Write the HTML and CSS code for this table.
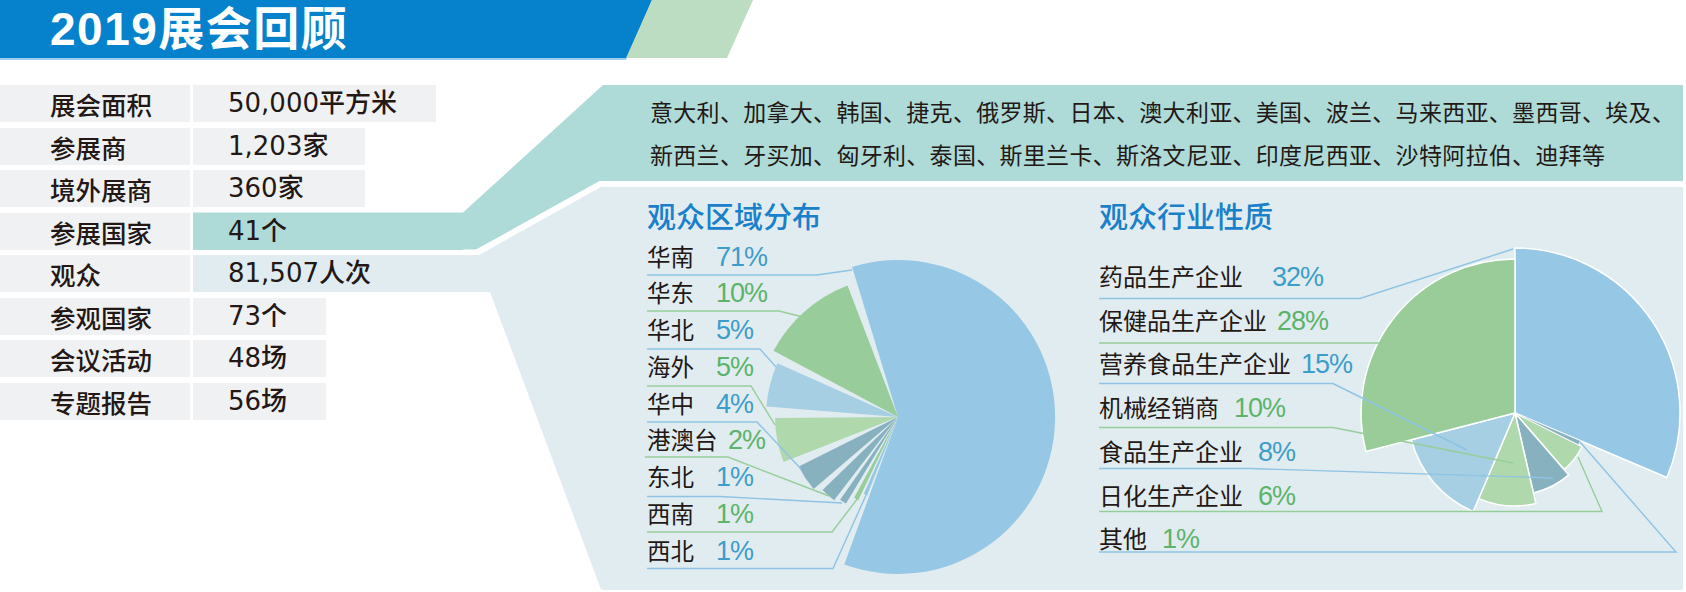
FILE: index.html
```html
<!DOCTYPE html>
<html lang="zh-CN">
<head>
<meta charset="utf-8">
<title>2019展会回顾</title>
<link rel="stylesheet" href="styles.css">
</head>
<body>
<div class="page">
  <svg class="connectors" viewBox="0 0 1686 592" width="1686" height="592" aria-hidden="true">
    <polygon class="c-teal" points="193,212.5 463,212.5 603,85 612,85 612,181 599.5,181 476,249.5 193,249.5"/>
    <polygon class="c-blue" points="193,255 479,255 601,187 612,187 612,589.5 601,589.5 490,292 193,292"/>
  </svg>

  <header class="head">
    <h1 class="title">2019展会回顾</h1>
    <div class="accent"></div>
  </header>

  <main class="main">
    <section class="stats">
      <div class="row"><div class="key">展会面积</div><div class="val w-lg">50,000平方米</div></div>
      <div class="row"><div class="key">参展商</div><div class="val w-md">1,203家</div></div>
      <div class="row"><div class="key">境外展商</div><div class="val w-md">360家</div></div>
      <div class="row"><div class="key">参展国家</div><div class="val v-teal">41个</div></div>
      <div class="row"><div class="key">观众</div><div class="val v-blue">81,507人次</div></div>
      <div class="row"><div class="key">参观国家</div><div class="val w-sm">73个</div></div>
      <div class="row"><div class="key">会议活动</div><div class="val w-sm">48场</div></div>
      <div class="row"><div class="key">专题报告</div><div class="val w-sm">56场</div></div>
    </section>

    <section class="right">
      <div class="countries">
        <p>意大利、加拿大、韩国、捷克、俄罗斯、日本、澳大利亚、美国、波兰、马来西亚、墨西哥、埃及、</p>
        <p>新西兰、牙买加、匈牙利、泰国、斯里兰卡、斯洛文尼亚、印度尼西亚、沙特阿拉伯、迪拜等</p>
      </div>

      <div class="charts">
        <div class="chart region">
          <svg class="plot" viewBox="603 187 470 402.5" aria-hidden="true">
            <g class="slices">
              <path fill="#96c7e4" d="M898 417L852.1 266.9A157 157 0 1 1 844.3 564.5Z"/>
              <path fill="#96c7e4" d="M898 417L867.2 495.2A84 84 0 0 1 863.8 493.7Z"/>
              <path fill="#99cc9b" d="M898 417L858.4 500A92 92 0 0 1 854.1 497.8Z"/>
              <path fill="#88b1c0" d="M898 417L846 503.6A101 101 0 0 1 840.1 499.7Z"/>
              <path fill="#88b1c0" d="M898 417L834.1 500.3A105 105 0 0 1 822.5 489.9Z"/>
              <path fill="#88b1c0" d="M898 417L813.6 489.1A111 111 0 0 1 798.7 466.5Z"/>
              <path fill="#b0d8ad" d="M898 417L783.6 462.1A123 123 0 0 1 775 418.1Z"/>
              <path fill="#a6cfe3" d="M898 417L766.4 406.6A132 132 0 0 1 777.4 363.3Z"/>
              <path fill="#99cc9b" d="M898 417L773.5 350.8A141 141 0 0 1 847.5 285.4Z"/>
            </g>
            <g class="leaders">
              <polyline class="lb" points="647,275 817,275 852,270"/>
              <polyline class="lg" points="647,311 779,311 803,317"/>
              <polyline class="lb" points="647,349 760,349 776,367"/>
              <polyline class="lg" points="647,386 751,386 775,425"/>
              <polyline class="lb" points="647,422 757,422 801,469"/>
              <polyline class="lg" points="645,457 728,457 829,496"/>
              <polyline class="lb" points="647,496.5 720,496.5 842,503"/>
              <polyline class="lg" points="647,532 832,532 858,498"/>
              <polyline class="lb" points="647,568.5 833,568.5 867,493"/>
            </g>
          </svg>
          <h2>观众区域分布</h2>
          <ul class="legend">
            <li><span class="lbl">华南</span><span class="pct b">71%</span></li>
            <li><span class="lbl">华东</span><span class="pct g">10%</span></li>
            <li><span class="lbl">华北</span><span class="pct b">5%</span></li>
            <li><span class="lbl">海外</span><span class="pct g">5%</span></li>
            <li><span class="lbl">华中</span><span class="pct b">4%</span></li>
            <li class="tight"><span class="lbl">港澳台</span><span class="pct g">2%</span></li>
            <li><span class="lbl">东北</span><span class="pct b">1%</span></li>
            <li><span class="lbl">西南</span><span class="pct g">1%</span></li>
            <li><span class="lbl">西北</span><span class="pct b">1%</span></li>
          </ul>
        </div>

        <div class="chart industry">
          <svg class="plot" viewBox="1073 187 610 402.5" aria-hidden="true">
            <g class="slices edged">
              <path fill="#96c7e4" d="M1515 413L1515 248A165 165 0 0 1 1666.9 477.5Z"/>
              <path fill="#b0d8ad" d="M1515 413L1582.1 446.5A75 75 0 0 1 1564.2 469.6Z"/>
              <path fill="#88b1c0" d="M1515 413L1568.8 474.9A82 82 0 0 1 1533.4 492.9Z"/>
              <path fill="#b0d8ad" d="M1515 413L1535.9 503.6A93 93 0 0 1 1478.7 498.6Z"/>
              <path fill="#a6cfe3" d="M1515 413L1473.2 511.5A107 107 0 0 1 1411.4 439.8Z"/>
              <path fill="#9acc9a" d="M1515 413L1365.9 451.6A154 154 0 0 1 1515 259Z"/>
              <path class="thin" fill="#88b1c0" d="M1515 413L1580.4 440.7A71 71 0 0 1 1578.5 444.7Z"/>
            </g>
            <g class="leaders">
              <polyline class="lb" points="1099,298.5 1360,298.5 1513,249"/>
              <polyline class="lg" points="1099,343 1380,343"/>
              <polyline class="lb" points="1099,383.5 1333,383.5 1467,450"/>
              <polyline class="lg" points="1099,427.5 1333,427.5 1513,463"/>
              <polyline class="lb" points="1099,468.5 1250,468.5 1553,478"/>
              <polyline class="lg" points="1099,511.5 1602,511.5 1578,457"/>
              <polyline class="lb" points="1099,552 1676,552 1580,442"/>
            </g>
          </svg>
          <h2>观众行业性质</h2>
          <ul class="legend">
            <li class="wide"><span class="lbl">药品生产企业</span><span class="pct b">32%</span></li>
            <li class="tight"><span class="lbl">保健品生产企业</span><span class="pct g">28%</span></li>
            <li class="tight"><span class="lbl">营养食品生产企业</span><span class="pct b">15%</span></li>
            <li><span class="lbl">机械经销商</span><span class="pct g">10%</span></li>
            <li><span class="lbl">食品生产企业</span><span class="pct b">8%</span></li>
            <li><span class="lbl">日化生产企业</span><span class="pct g">6%</span></li>
            <li><span class="lbl">其他</span><span class="pct g">1%</span></li>
          </ul>
        </div>
      </div>
    </section>
  </main>
</div>
</body>
</html>
```

FILE: styles.css
```css
* { box-sizing: border-box; }
html, body { margin: 0; padding: 0; }
body {
  width: 1686px;
  height: 592px;
  overflow: hidden;
  background: #fff;
  font-family: "Noto Sans CJK SC", sans-serif;
  color: #231815;
}
.page { position: relative; width: 1686px; height: 592px; }

/* decorative connector shapes behind the content */
.connectors { position: absolute; left: 0; top: 0; z-index: 0; }
.c-teal { fill: #aedbd8; }
.c-blue { fill: #e1ecf1; }

/* header */
.head { position: relative; z-index: 1; display: flex; height: 60px; }
.title {
  position: relative;
  isolation: isolate;
  margin: 0;
  width: 652px;
  height: 60px;
  padding-left: 50px;
  color: #fff;
  font-family: "Liberation Sans", "Noto Sans CJK SC", sans-serif;
  font-size: 46px;
  font-weight: 700;
  line-height: 58px;
  letter-spacing: 1.5px;
  white-space: nowrap;
}
.title::before {
  content: "";
  position: absolute;
  inset: 0;
  z-index: -1;
  background: linear-gradient(#0582cb 0, #0582cb 58px, #9ccdee 58px);
  clip-path: polygon(0 0, 652px 0, 626px 60px, 0 60px);
}
.accent {
  width: 127px;
  height: 58px;
  margin-left: -26px;
  background: #bcddc1;
  clip-path: polygon(26px 0, 127px 0, 101px 58px, 0 58px);
}

/* main area */
.main { position: relative; z-index: 1; display: flex; padding-top: 25px; }

.stats { flex: 0 0 603px; display: flex; flex-direction: column; gap: 5.5px; }
.row { display: flex; gap: 3px; height: 37px; line-height: 37px; white-space: nowrap; }
.key { width: 190px; padding-left: 50px; background: #f0f1f3; font-size: 25.5px; font-weight: 500; }
.val {
  padding-left: 35px;
  background: #f0f1f3;
  font-family: "DejaVu Sans", "Noto Sans CJK SC", sans-serif;
  font-size: 26px;
  font-weight: 500;
}
.w-lg { width: 243px; }
.w-md { width: 172px; }
.w-sm { width: 133px; }
.v-teal { width: 270px; background: #aedbd8; }
.v-blue { width: 286px; background: #e1ecf1; }

.right { flex: 0 0 1080px; display: flex; flex-direction: column; }
.countries {
  height: 96px;
  padding: 4.5px 0 0 47px;
  background: #aedbd8;
  font-size: 23px;
  line-height: 43px;
  letter-spacing: 0.3px;
}
.countries p { margin: 0; white-space: nowrap; }

.charts { margin-top: 6px; height: 402.5px; background: #e1ecf1; display: flex; }
.chart { position: relative; padding-top: 11px; }
.region { flex: 0 0 470px; padding-left: 44px; }
.industry { flex: 1 1 auto; padding-left: 26px; }

.plot { position: absolute; left: 0; top: 0; width: 100%; height: 100%; overflow: visible; }
.edged path { stroke: #fff; stroke-width: 1.5; stroke-linejoin: round; }
.edged path.thin { stroke-width: 0.6; }
.leaders polyline { fill: none; stroke-width: 1.4; }
.leaders .lb { stroke: #8dc3e3; }
.leaders .lg { stroke: #97cd99; }

.chart h2 {
  position: relative;
  margin: 0;
  font-size: 29px;
  font-weight: 500;
  line-height: 34px;
  color: #1a80c9;
  white-space: nowrap;
}
.legend { position: relative; list-style: none; margin: 0; padding: 0; }
.legend li { white-space: nowrap; }
.region .legend { margin-top: 5.6px; }
.region .legend li { height: 36.75px; line-height: 36.75px; font-size: 23.5px; }
.industry .legend { margin-top: 21.9px; }
.industry .legend li { height: 43.75px; line-height: 43.75px; font-size: 24px; }

.lbl { display: inline-block; }
.region .lbl { margin-right: 22px; }
.region .tight .lbl { margin-right: 10.5px; }
.industry .lbl { margin-right: 15px; }
.industry .wide .lbl { margin-right: 29px; }
.industry .tight .lbl { margin-right: 10px; }

.pct { font-family: "Liberation Sans", sans-serif; font-size: 27px; letter-spacing: -1px; }
.pct.b { color: #3d9dca; }
.pct.g { color: #5bb46a; }
```
